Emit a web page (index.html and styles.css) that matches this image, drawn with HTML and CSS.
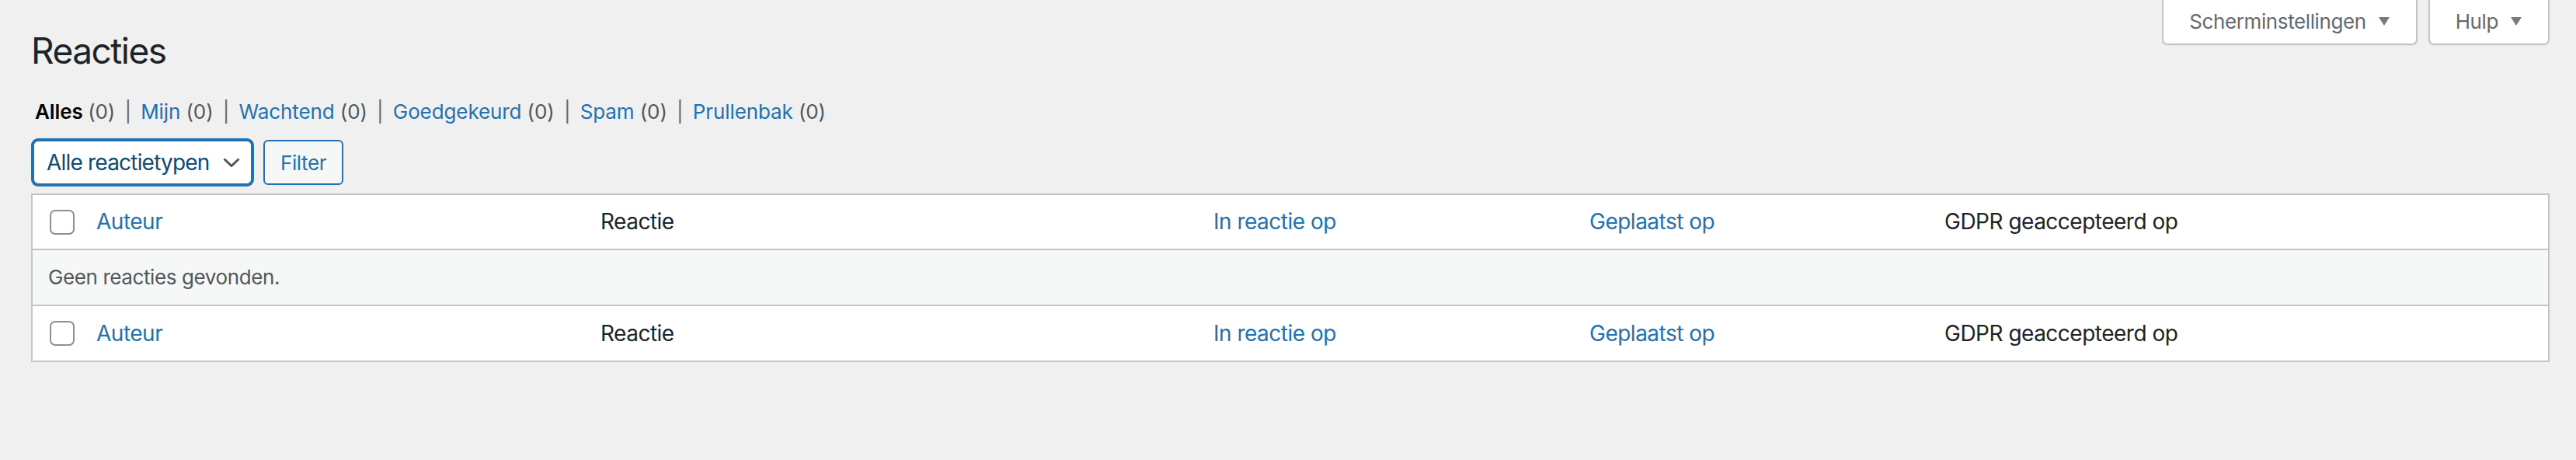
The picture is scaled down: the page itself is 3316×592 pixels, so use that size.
FILE: index.html
```html
<!DOCTYPE html>
<html lang="nl">
<head>
<meta charset="utf-8">
<title>Reacties</title>
<link rel="stylesheet" href="styles.css">
</head>
<body>
<div class="screen-meta-links">
  <button class="meta-toggle" type="button"><span>Scherminstellingen</span><span class="tri"></span></button>
  <button class="meta-toggle" type="button"><span>Hulp</span><span class="tri"></span></button>
</div>
<div class="wrap">
  <h1 class="page-title">Reacties</h1>
  <ul class="subsubsub">
    <li><a class="current" href="#">Alles <span class="count">(0)</span></a> |</li>
    <li><a href="#">Mijn <span class="count">(0)</span></a> |</li>
    <li><a href="#">Wachtend <span class="count">(0)</span></a> |</li>
    <li><a href="#">Goedgekeurd <span class="count">(0)</span></a> |</li>
    <li><a href="#">Spam <span class="count">(0)</span></a> |</li>
    <li><a href="#">Prullenbak <span class="count">(0)</span></a></li>
  </ul>
  <div class="tablenav">
    <div class="select">
      <span>Alle reactietypen</span>
      <svg class="chev" width="22" height="12" viewBox="0 0 22 12"><path d="M1.5 1.5 L11 10.5 L20.5 1.5" fill="none" stroke="#50575e" stroke-width="3"/></svg>
    </div>
    <button class="button" type="button">Filter</button>
  </div>
  <table class="widefat">
    <colgroup>
      <col class="c-check">
      <col class="c-author">
      <col class="c-comment">
      <col class="c-response">
      <col class="c-date">
      <col>
    </colgroup>
    <thead>
      <tr>
        <td class="check-column"><span class="cb"></span></td>
        <th><a href="#">Auteur</a></th>
        <th>Reactie</th>
        <th><a href="#">In reactie op</a></th>
        <th><a href="#">Geplaatst op</a></th>
        <th>GDPR geaccepteerd op</th>
      </tr>
    </thead>
    <tbody>
      <tr class="no-items">
        <td colspan="6">Geen reacties gevonden.</td>
      </tr>
    </tbody>
    <tfoot>
      <tr>
        <td class="check-column"><span class="cb"></span></td>
        <th><a href="#">Auteur</a></th>
        <th>Reactie</th>
        <th><a href="#">In reactie op</a></th>
        <th><a href="#">Geplaatst op</a></th>
        <th>GDPR geaccepteerd op</th>
      </tr>
    </tfoot>
  </table>
</div>
</body>
</html>
```

FILE: styles.css
```css
html, body {
  margin: 0;
  background: #f0f0f1;
}
body {
  padding: 0 34px 0 40px;
  font-family: Inter, "Noto Sans", sans-serif;
  color: #3c434a;
  font-size: 26px;
  letter-spacing: -0.4px;
}
a {
  color: #2271b1;
  text-decoration: none;
}

/* screen meta */
.screen-meta-links {
  float: right;
  display: flex;
  gap: 14px;
}
.meta-toggle {
  display: flex;
  align-items: center;
  height: 58px;
  padding: 0 34px 2px 33px;
  background: #fff;
  border: 2px solid #c3c4c7;
  border-top: none;
  border-radius: 0 0 7px 7px;
  font-family: inherit;
  font-size: 26px;
  letter-spacing: -0.4px;
  color: #646970;
  box-shadow: 0 1px 1px rgba(0,0,0,.04);
}
.tri {
  width: 0;
  height: 0;
  margin-left: 16px;
  border-left: 7.5px solid transparent;
  border-right: 7.5px solid transparent;
  border-top: 11px solid #787c82;
}

.wrap {
  padding-top: 20px;
}
.page-title {
  margin: 0;
  padding: 15px 0 7px;
  font-size: 46px;
  font-weight: 400;
  line-height: 60px;
  letter-spacing: -1.5px;
  color: #1d2327;
}

.subsubsub {
  list-style: none;
  margin: 16px 0 0;
  padding: 0;
  height: 52px;
  line-height: 52px;
  font-size: 26px;
  letter-spacing: -0.1px;
  color: #646970;
  white-space: nowrap;
}
.subsubsub li {
  display: inline-block;
}
.subsubsub a {
  padding: 0 5px;
}
.subsubsub a.current {
  color: #000;
  font-weight: 600;
}
.subsubsub .count {
  color: #50575e;
  font-weight: 400;
}

.tablenav {
  display: flex;
  align-items: flex-start;
  margin: 10px 0 11px 0;
  height: 58px;
}
.select {
  box-sizing: border-box;
  display: flex;
  align-items: center;
  justify-content: space-between;
  width: 283px;
  height: 58px;
  margin-left: 2px;
  padding: 0 14px 0 16px;
  background: #fff;
  border: 2px solid #2271b1;
  box-shadow: 0 0 0 2px #2271b1;
  border-radius: 7px;
  font-size: 28px;
  letter-spacing: -0.8px;
  color: #0a4b78;
}
.chev {
  display: block;
}
.button {
  box-sizing: border-box;
  height: 58px;
  margin-left: 14px;
  padding: 0 20px;
  background: #f6f7f7;
  border: 2px solid #2271b1;
  border-radius: 6px;
  font-family: inherit;
  font-size: 26px;
  letter-spacing: -0.4px;
  color: #2271b1;
}

.widefat {
  width: 100%;
  table-layout: fixed;
  border-collapse: collapse;
  border: 2px solid #c3c4c7;
  background: #fff;
  box-shadow: 0 1px 1px rgba(0,0,0,.04);
}
.c-check { width: 63px; }
.c-author { width: 649px; }
.c-comment { width: 789px; }
.c-response { width: 484px; }
.c-date { width: 457px; }

.widefat th,
.widefat td {
  padding: 16px 20px;
  line-height: 38px;
  text-align: left;
  font-weight: 400;
  vertical-align: middle;
}
.widefat thead th,
.widefat thead td {
  padding-top: 15px;
  padding-bottom: 16px;
}
.widefat th {
  font-size: 28px;
  letter-spacing: -0.5px;
  color: #1d2327;
}
.widefat thead tr {
  border-bottom: 2px solid #c3c4c7;
}
.widefat tfoot tr {
  border-top: 2px solid #c3c4c7;
}
.widefat td.check-column {
  padding: 0 0 0 22px;
}
.cb {
  display: block;
  box-sizing: border-box;
  width: 32px;
  height: 32px;
  border: 2px solid #8c8f94;
  border-radius: 7px;
  background: #fff;
}
.no-items td {
  background: #f6f7f7;
  color: #50575e;
  font-size: 26px;
}
```
